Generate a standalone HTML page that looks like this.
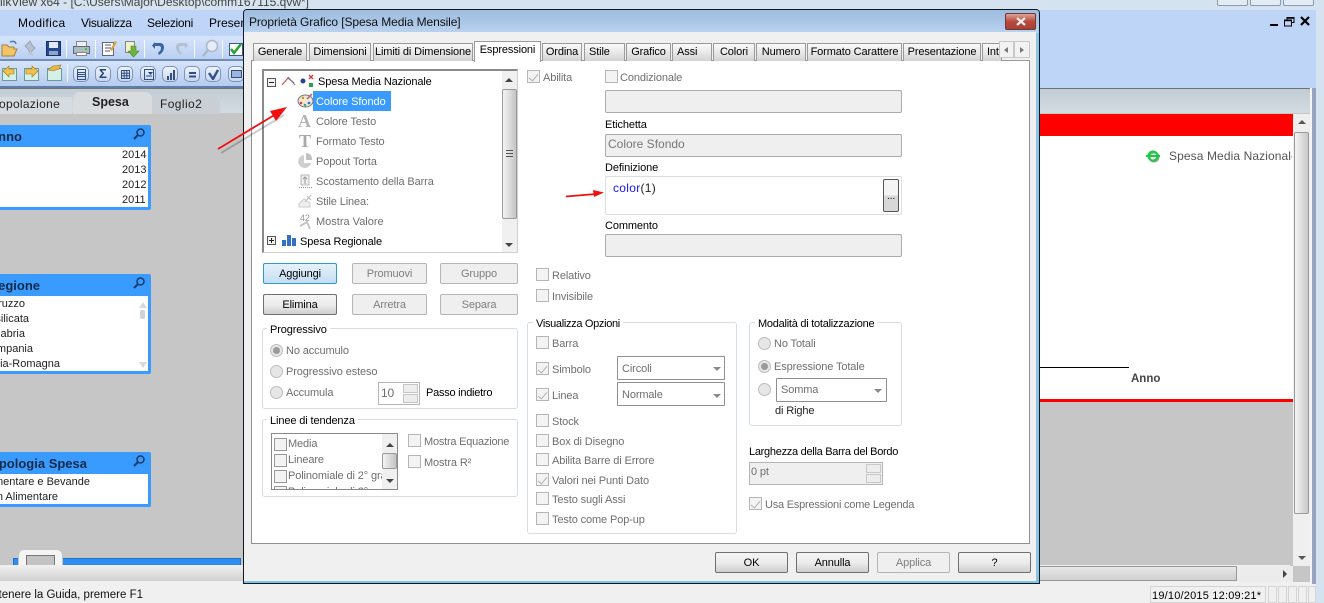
<!DOCTYPE html>
<html><head><meta charset="utf-8"><style>
html,body{margin:0;padding:0;width:1324px;height:603px;overflow:hidden;background:#f0f0f0}
body{position:relative;font:11px/14px "Liberation Sans",sans-serif;letter-spacing:-.12px;color:#000}
div,span.a,svg{position:absolute;box-sizing:border-box}
.t{white-space:nowrap;line-height:14px;margin-top:1px}
.g{color:#6f6f6f}
.tab{top:43px;height:18px;background:linear-gradient(#fafafa,#e8e8e8 50%,#d2d2d2);border:1px solid #9a9a9a;border-bottom:none;text-align:center;line-height:17px;white-space:nowrap;overflow:hidden}
.in{background:#efefef;border:1px solid #acacac;border-radius:2px}
.cb{width:13px;height:13px;background:#f3f3f3;border:1px solid #b5b5b5}
.ck::after{content:"";position:absolute;left:3px;top:1px;width:4px;height:8px;border:solid #b0b0b0;border-width:0 1.5px 1.5px 0;transform:rotate(40deg)}
.r{width:13px;height:13px;border-radius:50%;background:#e6e6e6;border:1px solid #bdbdbd}
.rs::after{content:"";position:absolute;left:2px;top:2px;width:7px;height:7px;border-radius:50%;background:#9a9a9a}
.btn{height:21px;border:1px solid #707070;border-radius:2px;background:linear-gradient(#f4f4f4,#ececec 50%,#cfcfcf);text-align:center;line-height:20px}
.dis{border-color:#b5b5b5;background:#efefef;color:#7f7f7f}
.grp{border:1px solid #d6dde3;border-radius:3px}
.lg{background:#fff;padding:0 3px;white-space:nowrap;line-height:14px}
.sel{background:#fff;border:1px solid #8f8f8f;border-radius:1px}
.ar{width:0;height:0;border-left:4px solid transparent;border-right:4px solid transparent;border-top:4px solid #8a8a8a}
.lb{background:#3a9bff;border-radius:2px}
.lbb{background:#fff}
.hd{font:bold 13px/16px "Liberation Sans",sans-serif;letter-spacing:0;color:#152a48;white-space:nowrap;display:flex;justify-content:flex-end;overflow:hidden;left:0}
.l{white-space:nowrap;color:#222;font-size:11px;letter-spacing:0}
.rt{display:flex;justify-content:flex-end;overflow:hidden;left:0}
.m{font-size:12px;margin-top:0}
.ic{border-radius:5px;background:linear-gradient(#eef3fb,#c8d6ee);border:1px solid #7f94b5;width:16px;height:16px;top:66px}
</style></head><body>
<!-- window top -->
<div style="left:0;top:0;width:1324px;height:10px;background:#d5e3f0"></div>
<div class="t m" style="left:0;top:-5px;color:#444;letter-spacing:0">likView x64 - [C:\Users\Major\Desktop\comm167115.qvw*]</div>
<div style="left:1217px;top:-6px;width:31px;height:12px;border:1px solid #8a9bb0;border-radius:2px;background:#e2ebf4"></div>
<div style="left:1250px;top:-6px;width:31px;height:12px;border:1px solid #8a9bb0;border-radius:2px;background:#e2ebf4"></div>
<div style="left:1283px;top:-6px;width:31px;height:12px;border:1px solid #8a9bb0;border-radius:2px;background:#e2ebf4"></div>
<!-- menu & toolbars -->
<div style="left:0;top:10px;width:1316px;height:78px;background:#bfd5f8"></div>
<div style="left:1316px;top:10px;width:8px;height:593px;background:#d5e3f0"></div>
<div style="left:0;top:36px;width:243px;height:25px;background:linear-gradient(#d6e4fb,#bad0f2);border-bottom:2px solid #6f8db8"></div>
<div style="left:0;top:61px;width:243px;height:27px;background:linear-gradient(#d6e4fb,#b6cdf0);border-bottom:2px solid #5f7ea8"></div>
<div class="t m" style="left:-19px;top:16px;letter-spacing:0">File</div>
<div class="t m" style="left:18px;top:16px;letter-spacing:.35px">Modifica</div>
<div class="t m" style="left:81px;top:16px;letter-spacing:-.3px">Visualizza</div>
<div class="t m" style="left:147px;top:16px;letter-spacing:-.3px">Selezioni</div>
<div class="t m" style="left:209px;top:16px;letter-spacing:0">Presenta</div>
<!-- toolbar icons -->
<svg style="left:0;top:36px" width="243" height="50" viewBox="0 0 243 50">
<path d="M2 9h5l2 2h5v2h3l-3 7H2z" fill="#f1c565" stroke="#a9803a"/><path d="M10 6q5-2 6 2" stroke="#5a7aa8" fill="none" stroke-width="1.500"/>
<path d="M25 10l5-5 2 4 3 3-5 5-2-4z" fill="#b5c0d0" stroke="#9aa5b8"/><path d="M31 15l3 5-6-2z" fill="#b9c4d4"/>
<rect x="46.500" y="5.500" width="14" height="14" fill="#25488f" stroke="#173168"/><rect x="49" y="6" width="9" height="6" fill="#dfe8f6"/><rect x="49" y="15" width="9" height="4" fill="#8fa6cc"/>
<rect x="66" y="4" width="1" height="18" fill="#f4f8ff"/>
<rect x="76.500" y="5.500" width="10" height="6" fill="#eee" stroke="#888"/><rect x="73.500" y="10.500" width="16" height="7" fill="#a9bdc4" stroke="#667"/><rect x="76.500" y="16.500" width="10" height="3" fill="#fff" stroke="#888"/><rect x="85" y="12" width="2" height="2" fill="#3c3"/>
<rect x="95" y="4" width="1" height="18" fill="#f4f8ff"/>
<rect x="102.500" y="6.500" width="11" height="13" fill="#fff" stroke="#667"/><path d="M105 9h6M105 12h6M105 15h5" stroke="#557" stroke-width="1"/><path d="M110 14l5-9 2 1-5 9z" fill="#d9a43a"/>
<rect x="125.500" y="5.500" width="9" height="11" fill="#f5f0c8" stroke="#789"/><path d="M131 10h5v5h3l-5.500 6-5.500-6h3z" fill="#6fb33e" stroke="#4b8a2a" stroke-width=".6"/>
<rect x="144" y="4" width="1" height="18" fill="#f4f8ff"/>
<path d="M155 7h5a4 4 0 0 1 4 4c0 4-2 6-5 8l-1-2c2-2 3-3 3-5a2 2 0 0 0-2-2h-4v3l-3-3.500 3-3.500z" fill="#3a64a8"/>
<path d="M185 7h-5a4 4 0 0 0-4 4c0 4 2 6 5 8l1-2c-2-2-3-3-3-5a2 2 0 0 1 2-2h4v3l3-3.500-3-3.500z" fill="#b3c1d4"/>
<rect x="194" y="4" width="1" height="18" fill="#f4f8ff"/>
<circle cx="212" cy="10" r="5.500" fill="#e6edf6" stroke="#aab7c8" stroke-width="1.500"/><path d="M208 14l-5 6" stroke="#aab7c8" stroke-width="2.500"/>
<rect x="222" y="4" width="1" height="18" fill="#f4f8ff"/>
<rect x="229.500" y="7.500" width="13" height="12" fill="#fff" stroke="#3a5a8a"/><path d="M231 13l3 4 7-9" stroke="#22a52c" stroke-width="2.500" fill="none"/>
<!-- row 2 -->
<rect x="2.500" y="32.500" width="14" height="12" fill="#d5efe9" stroke="#6a9a92"/><path d="M3 35l6-5v3h5v5H9v3z" fill="#f1c14a" stroke="#9a7a28" stroke-width=".6"/>
<rect x="24.500" y="32.500" width="14" height="12" fill="#d5efe9" stroke="#6a9a92"/><path d="M38 35l-6-5v3h-6v5h6v3z" fill="#f1c14a" stroke="#9a7a28" stroke-width=".6"/>
<rect x="47.500" y="32.500" width="14" height="12" fill="#d5efe9" stroke="#6a9a92"/><path d="M48 34l5-4 8-1-2 4-6 2z" fill="#e9b646" stroke="#9a7a28" stroke-width=".6"/>
<rect x="67" y="28" width="1" height="18" fill="#f4f8ff"/>
</svg>
<div class="ic" style="left:73px"><svg style="left:3px;top:2px" width="9" height="11"><path d="M.5.5h8v10h-8zM.5 3.500h8M.5 5.500h8M.5 7.500h8" fill="none" stroke="#2f4f86"/></svg></div>
<div class="ic" style="left:95px"><div class="t" style="left:3px;top:0;margin:0;font:bold 13px/14px 'Liberation Sans';color:#24437c">Σ</div></div>
<div class="ic" style="left:117px"><svg style="left:3px;top:3px" width="9" height="9"><path d="M.5.5h8v8h-8zM3.200.5v8M5.800.5v8M.5 3.200h8M.5 5.800h8" fill="none" stroke="#2f4f86"/></svg></div>
<div class="ic" style="left:140px"><svg style="left:3px;top:2px" width="10" height="11"><path d="M.5.5h9v10h-9z" fill="none" stroke="#2f4f86"/><path d="M4 3h5l-2.500 3z" fill="#24437c"/><path d="M2 7h6" stroke="#2f4f86"/></svg></div>
<div class="ic" style="left:162px"><svg style="left:3px;top:2px" width="10" height="11"><path d="M1 7h2v4H1zM4 4h2v7H4zM7 1h2v10H7z" fill="#2f4f86"/></svg></div>
<div class="ic" style="left:184px"><svg style="left:3px;top:4px" width="9" height="7"><path d="M1 1h7v2H1zM1 4.500h7v2H1z" fill="#2f4f86"/></svg></div>
<div class="ic" style="left:205px"><svg style="left:2px;top:2px" width="11" height="11"><path d="M1 4l4 6 5-9" fill="none" stroke="#2f4f86" stroke-width="2.400"/></svg></div>
<div class="ic" style="left:228px"><svg style="left:2px;top:3px" width="11" height="9"><path d="M.5.500h10v7h-10z" fill="#9fb6dc" stroke="#2f4f86"/></svg></div>
<!-- sheet -->
<div style="left:0;top:88px;width:1310px;height:25px;background:linear-gradient(#c2ccd4,#d2dbe2);border-top:1px solid #6f7478"></div>
<div style="left:0;top:113px;width:1310px;height:453px;background:#c6c6c6"></div>
<div style="left:0;top:97px;width:72px;height:17px;background:#d7dce0"></div>
<div class="t m" style="left:-1px;top:97px;color:#222;letter-spacing:.3px">opolazione</div>
<div style="left:73px;top:92px;width:79px;height:22px;background:#d8dcdf;border-radius:7px 7px 0 0"></div>
<div class="t" style="left:92px;top:95px;margin:0;font-weight:bold;color:#222;font-size:12.500px;letter-spacing:0">Spesa</div>
<div style="left:152px;top:97px;width:68px;height:17px;background:#c9cfd4;border-radius:0 6px 0 0"></div>
<div class="t m" style="left:160px;top:97px;color:#222;letter-spacing:.4px">Foglio2</div>
<!-- list boxes -->
<div class="lb" style="left:-10px;top:125px;width:161px;height:85px"></div>
<div class="lbb" style="left:0;top:147px;width:148px;height:60px"></div>
<div class="hd" style="width:22px;top:129px">Anno</div>
<div class="t l" style="left:122px;top:147px">2014</div><div class="t l" style="left:122px;top:162px">2013</div><div class="t l" style="left:122px;top:177px">2012</div><div class="t l" style="left:122px;top:192px">2011</div>
<div class="lb" style="left:-10px;top:274px;width:161px;height:100px"></div>
<div class="lbb" style="left:0;top:296px;width:148px;height:75px"></div>
<div class="hd" style="width:40px;top:278px">Regione</div>
<div class="t l rt" style="width:25px;top:296px">Abruzzo</div>
<div class="t l rt" style="width:29px;top:311px">Basilicata</div>
<div class="t l rt" style="width:25px;top:326px">Calabria</div>
<div class="t l rt" style="width:33px;top:341px">Campania</div>
<div class="t l rt" style="width:60px;top:356px">Emilia-Romagna</div>
<div style="left:140px;top:310px;width:5px;height:9px;background:#cfd3d8;border-radius:2px"></div>
<div style="left:139px;top:302px;width:0;height:0;border:4px solid transparent;border-bottom:6px solid #d5d8dc;border-top:0"></div>
<div style="left:139px;top:362px;width:0;height:0;border:4px solid transparent;border-top:6px solid #d5d8dc;border-bottom:0"></div>
<div class="lb" style="left:-10px;top:452px;width:161px;height:55px"></div>
<div class="lbb" style="left:0;top:474px;width:148px;height:30px"></div>
<div class="hd" style="width:87px;top:456px">Tipologia Spesa</div>
<div class="t l rt" style="width:90px;top:474px">Alimentare e Bevande</div>
<div class="t l rt" style="width:58px;top:489px">Non Alimentare</div>
<svg style="left:132px;top:127px" width="14" height="14"><circle cx="8.500" cy="5.500" r="3.500" fill="none" stroke="#1c3a66" stroke-width="1.500"/><path d="M6 8l-4 4" stroke="#1c3a66" stroke-width="2"/></svg>
<svg style="left:132px;top:276px" width="14" height="14"><circle cx="8.500" cy="5.500" r="3.500" fill="none" stroke="#1c3a66" stroke-width="1.500"/><path d="M6 8l-4 4" stroke="#1c3a66" stroke-width="2"/></svg>
<svg style="left:132px;top:454px" width="14" height="14"><circle cx="8.500" cy="5.500" r="3.500" fill="none" stroke="#1c3a66" stroke-width="1.500"/><path d="M6 8l-4 4" stroke="#1c3a66" stroke-width="2"/></svg>
<!-- bottom-left blue tab -->
<div style="left:13px;top:558px;width:228px;height:8px;background:#2f8cf0;border:1px solid #1c6fc8;border-bottom:0"></div>
<div style="left:18px;top:549px;width:45px;height:17px;background:#f4f4f4;border:1px solid #c4c4c4;border-bottom:0;border-radius:6px 6px 0 0"></div>
<div style="left:26px;top:555px;width:29px;height:11px;background:#c3c3c3;border:1px solid #777;border-bottom:0"></div>
<div style="left:0;top:565px;width:1290px;height:19px;background:#f0f0f0"></div>
<div style="left:0;top:566px;width:1236px;height:15px;background:linear-gradient(#efefef,#d0d0d0)"></div>
<!-- status -->
<div class="t rt" style="width:143px;top:588px;margin:0;color:#111;font-size:11.500px;letter-spacing:0;height:14px">Per ottenere la Guida, premere F1</div>
<div style="left:1150px;top:586px;width:116px;height:17px;border:1px solid #d4d4d4"></div>
<div class="t" style="left:1152px;top:588px;letter-spacing:.2px">19/10/2015 12:09:21*</div>
<div style="left:1268px;top:586px;width:9px;height:17px;border:1px solid #d4d4d4"></div>
<div style="left:1278px;top:586px;width:9px;height:17px;border:1px solid #d4d4d4"></div>
<div style="left:1288px;top:586px;width:9px;height:17px;border:1px solid #d4d4d4"></div>
<div style="left:1298px;top:586px;width:9px;height:17px;border:1px solid #d4d4d4"></div>
<div style="left:1308px;top:586px;width:8px;height:17px;border:1px solid #d4d4d4"></div>
<!-- right chart -->
<div style="left:1040px;top:114px;width:253px;height:22px;background:#f00"></div>
<div style="left:1040px;top:136px;width:253px;height:263px;background:#fff"></div>
<div style="left:1040px;top:399px;width:253px;height:3px;background:#f00"></div>
<div style="left:1040px;top:367px;width:89px;height:1px;background:#000"></div>
<div class="t" style="left:1131px;top:372px;margin:0;font-weight:bold;color:#444;font-size:11.500px;letter-spacing:0">Anno</div>
<div class="t m" style="left:1169px;top:149px;color:#555;letter-spacing:.1px;width:123px;overflow:hidden">Spesa Media Nazionale</div>
<svg style="left:1143px;top:148px" width="20" height="16"><circle cx="11" cy="9" r="4.500" fill="none" stroke="#999" stroke-width="2"/><circle cx="10" cy="8" r="4.500" fill="none" stroke="#12d03c" stroke-width="2"/><path d="M3 8h14" stroke="#12d03c" stroke-width="2"/></svg>
<div style="left:1293px;top:114px;width:17px;height:452px;background:#efefef"></div>
<div style="left:1294px;top:132px;width:15px;height:382px;background:linear-gradient(90deg,#f4f4f4,#c8c8c8);border:1px solid #9a9a9a;border-radius:2px"></div>
<div style="left:1298px;top:120px;width:0;height:0;border:4px solid transparent;border-bottom:4px solid #555;border-top:0"></div>
<div style="left:1298px;top:556px;width:0;height:0;border:4px solid transparent;border-top:4px solid #555;border-bottom:0"></div>
<div style="left:1310px;top:88px;width:2px;height:496px;background:#f4f4f4"></div>
<div style="left:1312px;top:88px;width:4px;height:496px;background:#98a4bf"></div>
<div style="left:1293px;top:566px;width:17px;height:16px;background:#c6c6c6"></div>
<div style="left:1040px;top:566px;width:253px;height:16px;background:#ececec"></div>
<div style="left:1040px;top:566px;width:197px;height:15px;background:linear-gradient(#e8e8e8,#cfcfcf);border:1px solid #999;border-left:0"></div>
<div style="left:1283px;top:570px;width:0;height:0;border:4px solid transparent;border-left:4px solid #444;border-right:0"></div>
<!-- window controls -->
<div style="left:1270px;top:24px;width:8px;height:2px;background:#000"></div>
<svg style="left:1284px;top:17px" width="11" height="10"><path d="M3 2.500V.500h7v5H8M.500 3h7v6h-7z" fill="none" stroke="#000"/><path d="M.500 3.500h7M3 1h7" stroke="#000" stroke-width="1.500"/></svg>
<svg style="left:1300px;top:16px" width="11" height="10"><path d="M1 1l8 8M9 1l-8 8" stroke="#000" stroke-width="2.200"/></svg>
<!-- DIALOG -->
<div style="left:243px;top:9px;width:797px;height:575px;background:#f0f0f0;border:1px solid #101820;border-radius:4px 4px 0 0;overflow:hidden">
<div style="left:0;top:0;width:795px;height:23px;background:linear-gradient(#9dbcdf,#b9d2ef)"></div>
<div style="left:0;top:23px;width:3px;height:552px;background:#b9d2ef"></div>
<div style="left:791px;top:23px;width:4px;height:552px;background:#8cc4e8"></div>
<div style="left:0;top:570px;width:795px;height:3px;background:#7cc4e8"></div>
</div>
<div class="t m" style="left:249px;top:15px;letter-spacing:-.1px;color:#111">Proprietà Grafico [Spesa Media Mensile]</div>
<div style="left:1005px;top:13px;width:31px;height:17px;background:linear-gradient(#dda596,#b84a3c 50%,#a84036);border:1px solid #6e3a35;border-radius:2px"></div>
<svg style="left:1015px;top:17px" width="12" height="9"><path d="M2 1l8 7M10 1l-8 7" stroke="#eee" stroke-width="2.200"/></svg>
<div style="left:244px;top:32px;width:792px;height:549px;background:#f0f0f0"></div>
<!-- panel -->
<div style="left:251px;top:60px;width:779px;height:484px;background:#fff;border:1px solid #8f8f8f;border-top-color:#9a9a9a"></div>
<div class="tab" style="left:253px;width:54px">Generale</div>
<div class="tab" style="left:309px;width:62px">Dimensioni</div>
<div class="tab" style="left:373px;width:100px">Limiti di Dimensione</div>
<div class="tab" style="left:474px;top:41px;height:21px;width:67px;background:#fff;z-index:2;line-height:17px">Espressioni</div>
<div class="tab" style="left:542px;width:40px">Ordina</div>
<div class="tab" style="left:584px;width:41px;text-align:left;padding-left:4px">Stile</div>
<div class="tab" style="left:626px;width:45px">Grafico</div>
<div class="tab" style="left:672px;width:40px;text-align:left;padding-left:4px">Assi</div>
<div class="tab" style="left:713px;width:42px">Colori</div>
<div class="tab" style="left:756px;width:50px">Numero</div>
<div class="tab" style="left:807px;width:95px">Formato Carattere</div>
<div class="tab" style="left:903px;width:78px">Presentazione</div>
<div class="tab" style="left:982px;width:20px;text-align:left;padding-left:4px">Int</div>
<div style="left:999px;top:41px;width:15px;height:17px;background:#f2f2f2;border:1px solid #c8c8c8"></div>
<div style="left:1014px;top:41px;width:16px;height:17px;background:#f2f2f2;border:1px solid #c8c8c8"></div>
<div style="left:1004px;top:47px;width:0;height:0;border:3.500px solid transparent;border-right:4px solid #777;border-left:0"></div>
<div style="left:1020px;top:47px;width:0;height:0;border:3.500px solid transparent;border-left:4px solid #777;border-right:0"></div>
<!-- tree -->
<div style="left:262px;top:69px;width:256px;height:184px;background:#fff;border:2px solid #8a8a8a;border-right-color:#cfcfcf;border-bottom-color:#cfcfcf;border-width:2px 1px 1px 2px"></div>
<div style="left:502px;top:71px;width:15px;height:181px;background:#f0f0f0"></div>
<div style="left:502px;top:89px;width:15px;height:130px;background:linear-gradient(90deg,#f4f4f4,#c4c4c4);border:1px solid #9a9a9a;border-radius:2px"></div>
<div style="left:506px;top:150px;width:7px;height:8px;background:repeating-linear-gradient(#555 0 1px,transparent 1px 3px)"></div>
<div style="left:505px;top:78px;width:0;height:0;border:4px solid transparent;border-bottom:4px solid #444;border-top:0"></div>
<div style="left:505px;top:243px;width:0;height:0;border:4px solid transparent;border-top:4px solid #444;border-bottom:0"></div>
<div style="left:267px;top:78px;width:9px;height:9px;border:1px solid #555;background:#f2f2f2"></div><div style="left:269px;top:82px;width:5px;height:1px;background:#222"></div>
<div style="left:267px;top:236px;width:9px;height:9px;border:1px solid #555;background:#f2f2f2"></div><div style="left:269px;top:240px;width:5px;height:1px;background:#222"></div><div style="left:271px;top:238px;width:1px;height:5px;background:#222"></div>
<svg style="left:281px;top:73px" width="36" height="18"><path d="M1 12l6-7 6 5" fill="none" stroke="#c55" stroke-width="1.200"/><path d="M7 4l7 8" stroke="#778" stroke-width="1"/><circle cx="22" cy="8" r="2.500" fill="#27458c"/><path d="M28 2l4 4M32 2l-4 4" stroke="#d33" stroke-width="1.300"/><rect x="28" y="10" width="4" height="4" fill="#2fa04a"/></svg>
<svg style="left:281px;top:233px" width="16" height="14"><path d="M1 7h4v6H1zM6 2h4v11H6zM11 5h4v8h-4z" fill="#3270c8"/></svg>
<div class="t" style="left:318px;top:74px">Spesa Media Nazionale</div>
<div class="t" style="left:300px;top:234px">Spesa Regionale</div>
<div style="left:313px;top:91px;width:78px;height:20px;background:#3a9bff"></div>
<div class="t" style="left:316px;top:94px;color:#fff;letter-spacing:-.05px">Colore Sfondo</div>
<svg style="left:297px;top:92px" width="17" height="17"><ellipse cx="8.500" cy="9" rx="7.500" ry="6" fill="#efe8d8" stroke="#777"/><circle cx="4" cy="11" r="1.300" fill="#d33"/><circle cx="8" cy="13" r="1.300" fill="#3a7"/><circle cx="12" cy="11" r="1.300" fill="#36c"/><circle cx="6" cy="6" r="1.200" fill="#c90"/><path d="M10 7l5-5" stroke="#a66" stroke-width="1.500"/></svg>
<div class="t g" style="left:316px;top:114px">Colore Testo</div>
<div class="t g" style="left:316px;top:134px">Formato Testo</div>
<div class="t g" style="left:316px;top:154px">Popout Torta</div>
<div class="t g" style="left:316px;top:174px">Scostamento della Barra</div>
<div class="t g" style="left:316px;top:194px">Stile Linea:</div>
<div class="t g" style="left:316px;top:214px;letter-spacing:0">Mostra Valore</div>
<div class="t" style="left:298px;top:112px;margin:0;font:bold 18px/18px 'Liberation Serif',serif;color:#b4b4b4">A</div>
<div class="t" style="left:299px;top:132px;margin:0;font:bold 18px/18px 'Liberation Serif',serif;color:#a8a8a8">T</div>
<svg style="left:297px;top:152px" width="17" height="17"><path d="M7 3a6.500 6.500 0 1 0 7 8H7z" fill="#cfcfcf"/><path d="M9 1a6 6 0 0 1 6 7H9z" fill="#c2c2c2"/></svg>
<svg style="left:298px;top:173px" width="15" height="16"><rect x="3" y="2" width="8" height="10" fill="#eee" stroke="#bbb"/><path d="M7 11V4M5 6l2-2 2 2" stroke="#999" fill="none"/><path d="M1 14.500h13" stroke="#999" stroke-dasharray="1 1"/></svg>
<svg style="left:298px;top:193px" width="15" height="15"><path d="M1 11l5-5 6 4V14H1z" fill="#eee" stroke="#ccc"/><path d="M7 9l6-7M9 3l4 4" stroke="#bbb"/></svg>
<div class="t" style="left:300px;top:211px;margin:0;font-size:9px;color:#999">42</div>
<svg style="left:298px;top:220px" width="15" height="11"><path d="M2 6l7-4 3 7" fill="none" stroke="#c4c4c4" stroke-width="2"/></svg>
<!-- left buttons -->
<div class="btn" style="left:263px;top:263px;width:74px;border-color:#2e9bd0;background:linear-gradient(#e6f2fb,#c4def2)">Aggiungi</div>
<div class="btn dis" style="left:352px;top:263px;width:75px">Promuovi</div>
<div class="btn dis" style="left:440px;top:263px;width:78px">Gruppo</div>
<div class="btn" style="left:263px;top:294px;width:74px">Elimina</div>
<div class="btn dis" style="left:352px;top:294px;width:75px">Arretra</div>
<div class="btn dis" style="left:440px;top:294px;width:78px">Separa</div>
<!-- progressivo -->
<div class="grp" style="left:262px;top:328px;width:256px;height:81px"></div>
<div class="t lg" style="left:267px;top:323px;margin:0">Progressivo</div>
<div class="r rs" style="left:270px;top:344px"></div><div class="t g" style="left:286px;top:343px">No accumulo</div>
<div class="r" style="left:270px;top:365px"></div><div class="t g" style="left:286px;top:364px">Progressivo esteso</div>
<div class="r" style="left:270px;top:386px"></div><div class="t g" style="left:286px;top:385px">Accumula</div>
<div style="left:378px;top:382px;width:42px;height:23px;border:1px solid #b5b5b5;background:#fff"></div>
<div class="t g m" style="left:381px;top:386px">10</div>
<div style="left:403px;top:384px;width:15px;height:9px;background:#ededed;border:1px solid #c4c4c4"></div>
<div style="left:403px;top:394px;width:15px;height:9px;background:#ededed;border:1px solid #c4c4c4"></div>
<div class="t" style="left:426px;top:385px;letter-spacing:-.25px">Passo indietro</div>
<!-- tendenza -->
<div class="grp" style="left:262px;top:419px;width:256px;height:78px"></div>
<div class="t lg" style="left:267px;top:413px">Linee di tendenza</div>
<div style="left:271px;top:433px;width:127px;height:57px;border:1px solid #8a8a8a;background:#fff;overflow:hidden">
<div class="cb" style="left:2px;top:4px;border-color:#999"></div><div class="t g" style="left:16px;top:2px">Media</div>
<div class="cb" style="left:2px;top:20px;border-color:#999"></div><div class="t g" style="left:16px;top:18px">Lineare</div>
<div class="cb" style="left:2px;top:36px;border-color:#999"></div><div class="t g" style="left:16px;top:34px">Polinomiale di 2° grado</div>
<div class="cb" style="left:2px;top:52px;border-color:#999"></div><div class="t g" style="left:16px;top:50px">Polinomiale di 3°</div>
<div style="left:110px;top:0;width:15px;height:55px;background:#f0f0f0"></div>
<div style="left:110px;top:19px;width:15px;height:16px;background:linear-gradient(90deg,#f4f4f4,#c4c4c4);border:1px solid #9a9a9a;border-radius:2px"></div>
<div style="left:114px;top:9px;width:0;height:0;border:4px solid transparent;border-bottom:4px solid #444;border-top:0"></div>
<div style="left:114px;top:45px;width:0;height:0;border:4px solid transparent;border-top:4px solid #444;border-bottom:0"></div>
</div>
<div class="cb" style="left:408px;top:434px"></div><div class="t g" style="left:424px;top:434px;letter-spacing:-.22px">Mostra Equazione</div>
<div class="cb" style="left:408px;top:455px"></div><div class="t g" style="left:424px;top:455px">Mostra R²</div>
<!-- right col top -->
<div class="cb ck" style="left:527px;top:70px"></div><div class="t g" style="left:543px;top:70px">Abilita</div>
<div class="cb" style="left:605px;top:70px"></div><div class="t g" style="left:620px;top:70px">Condizionale</div>
<div class="in" style="left:605px;top:90px;width:297px;height:23px"></div>
<div class="t" style="left:605px;top:117px">Etichetta</div>
<div class="in" style="left:605px;top:134px;width:297px;height:23px"></div>
<div class="t m" style="left:608px;top:137px;color:#777;letter-spacing:0">Colore Sfondo</div>
<div class="t" style="left:605px;top:160px">Definizione</div>
<div style="left:605px;top:176px;width:297px;height:39px;background:#fff;border:1px solid #d8dee4;border-radius:2px"></div>
<div class="t m" style="left:613px;top:181px;letter-spacing:.3px"><span style="color:#1414ff">color</span><span style="color:#222">(1)</span></div>
<div style="left:883px;top:179px;width:16px;height:33px;background:linear-gradient(#f4f4f4 50%,#d8d8d8 50%);border:1px solid #555;border-radius:2px;text-align:center;line-height:34px;font-size:10px">...</div>
<div class="t" style="left:605px;top:218px">Commento</div>
<div class="in" style="left:605px;top:234px;width:297px;height:23px"></div>
<div class="cb" style="left:536px;top:268px"></div><div class="t g" style="left:552px;top:268px">Relativo</div>
<div class="cb" style="left:536px;top:289px"></div><div class="t g" style="left:552px;top:289px">Invisibile</div>
<!-- visualizza -->
<div class="grp" style="left:527px;top:322px;width:210px;height:212px"></div>
<div class="t lg" style="left:533px;top:316px;letter-spacing:-.32px">Visualizza Opzioni</div>
<div class="cb" style="left:536px;top:336px"></div><div class="t g" style="left:552px;top:336px">Barra</div>
<div class="cb ck" style="left:536px;top:362px"></div><div class="t g" style="left:552px;top:362px">Simbolo</div>
<div class="cb ck" style="left:536px;top:388px"></div><div class="t g" style="left:552px;top:388px">Linea</div>
<div class="cb" style="left:536px;top:414px"></div><div class="t g" style="left:552px;top:414px">Stock</div>
<div class="cb" style="left:536px;top:434px"></div><div class="t g" style="left:552px;top:434px">Box di Disegno</div>
<div class="cb" style="left:536px;top:453px"></div><div class="t g" style="left:552px;top:453px">Abilita Barre di Errore</div>
<div class="cb ck" style="left:536px;top:473px"></div><div class="t g" style="left:552px;top:473px">Valori nei Punti Dato</div>
<div class="cb" style="left:536px;top:492px"></div><div class="t g" style="left:552px;top:492px">Testo sugli Assi</div>
<div class="cb" style="left:536px;top:512px"></div><div class="t g" style="left:552px;top:512px">Testo come Pop-up</div>
<div class="sel" style="left:617px;top:356px;width:108px;height:24px"></div><div class="t g" style="left:622px;top:361px">Circoli</div><div class="ar" style="left:713px;top:367px"></div>
<div class="sel" style="left:617px;top:382px;width:108px;height:24px"></div><div class="t g" style="left:622px;top:387px">Normale</div><div class="ar" style="left:713px;top:394px"></div>
<!-- modalita -->
<div class="grp" style="left:749px;top:322px;width:153px;height:104px"></div>
<div class="t lg" style="left:755px;top:316px;letter-spacing:-.25px">Modalità di totalizzazione</div>
<div class="r" style="left:758px;top:337px"></div><div class="t g" style="left:774px;top:336px">No Totali</div>
<div class="r rs" style="left:758px;top:360px"></div><div class="t g" style="left:774px;top:359px">Espressione Totale</div>
<div class="r" style="left:758px;top:383px"></div>
<div class="sel" style="left:776px;top:378px;width:111px;height:24px"></div><div class="t g" style="left:781px;top:382px">Somma</div><div class="ar" style="left:874px;top:389px"></div>
<div class="t" style="left:775px;top:403px;color:#222">di Righe</div>
<div class="t" style="left:749px;top:444px;letter-spacing:-.28px">Larghezza della Barra del Bordo</div>
<div style="left:749px;top:462px;width:134px;height:23px;background:#efefef;border:1px solid #b5b5b5"></div>
<div class="t g" style="left:751px;top:464px">0 pt</div>
<div style="left:866px;top:464px;width:15px;height:9px;background:#ededed;border:1px solid #c8c8c8"></div>
<div style="left:866px;top:474px;width:15px;height:9px;background:#ededed;border:1px solid #c8c8c8"></div>
<div class="cb ck" style="left:749px;top:497px"></div><div class="t g" style="left:765px;top:497px;letter-spacing:-.22px">Usa Espressioni come Legenda</div>
<!-- bottom buttons -->
<div class="btn" style="left:715px;top:552px;width:73px">OK</div>
<div class="btn" style="left:796px;top:552px;width:73px">Annulla</div>
<div class="btn dis" style="left:877px;top:552px;width:73px">Applica</div>
<div class="btn" style="left:958px;top:552px;width:73px">?</div>
<!-- red arrows -->
<svg style="left:210px;top:95px" width="90" height="65"><path d="M9 56L72 18" stroke="#000" stroke-opacity=".2" stroke-width="2" transform="translate(2 2)"/><path d="M8 54L66 19" stroke="#f01010" stroke-width="1.800"/><path d="M77 12L60 16l6 10z" fill="#f01010"/></svg>
<svg style="left:560px;top:182px" width="50" height="22"><path d="M6 14.500L36 12" stroke="#f01010" stroke-width="1.800"/><path d="M44 10.500L33 8l1 7z" fill="#f01010"/></svg>
</body></html>
